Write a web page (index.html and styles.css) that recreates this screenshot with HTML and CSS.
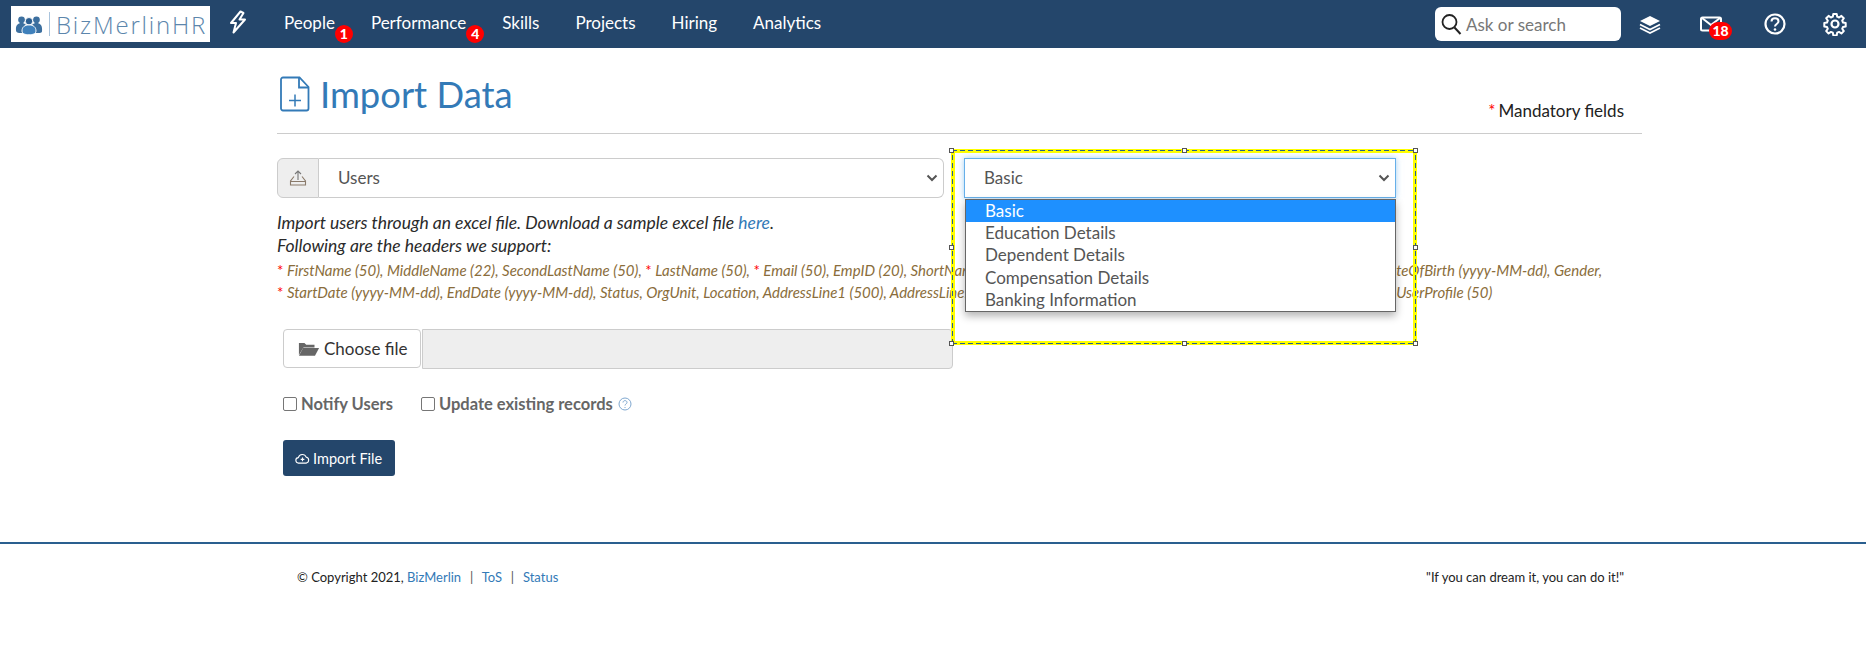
FILE: index.html
```html
<!DOCTYPE html>
<html lang="en">

<head>
  <meta charset="UTF-8">
  <title>Import Data</title>
  <link rel="stylesheet" href="styles.css">
</head>

<body>
  <header class="topbar">
    <a class="logo">
      <svg class="logo-mark" viewBox="0 0 30 24" width="28" height="23">
        <circle cx="7" cy="7" r="3.600" fill="#3c6f9f" />
        <circle cx="23" cy="7" r="3.600" fill="#3c6f9f" />
        <path d="M1 17c0-4 2-6.500 6-6.500s6 2.500 6 6.500-2 4-6 4-6 0-6-4zM17 17c0-4 2-6.500 6-6.500s6 2.500 6 6.500 0 4-6 4-6 0-6-4z" fill="#3c6f9f" />
        <circle cx="15" cy="8.500" r="4" fill="#2c5f92" stroke="#fff" />
        <path d="M7.500 19c0-4.500 3-6.500 7.500-6.500s7.500 2 7.500 6.500c0 3-3.500 4-7.500 4s-7.500-1-7.500-4z" fill="#3f80bb" stroke="#fff" />
      </svg>
      <span class="logo-sep"></span>
      <span class="logo-text">BizMerlinHR</span>
    </a>
    <svg class="bolt" viewBox="0 0 18 24" width="18" height="24">
      <path d="M11.500 1.500 2 13h5l-2.500 9.500L16 9.500h-5.500l4-6.500z" fill="none" stroke="#fff" stroke-width="2" stroke-linejoin="round" />
    </svg>
    <nav class="nav">
      <a>People<span class="dot">1</span></a>
      <a>Performance<span class="dot">4</span></a>
      <a>Skills</a>
      <a>Projects</a>
      <a>Hiring</a>
      <a>Analytics</a>
    </nav>
    <div class="search">
      <svg viewBox="0 0 22 24" width="22" height="24">
        <circle cx="9.500" cy="10" r="7" fill="none" stroke="#222" stroke-width="1.800" />
        <path d="m14.500 15.500 6 6.500" stroke="#222" stroke-width="2" />
      </svg>
      <span>Ask or search</span>
    </div>
    <div class="tools">
      <svg viewBox="0 0 24 20" width="24" height="20">
        <path d="M12 2 22 7l-10 5L2 7z" fill="#fff" />
        <path d="m2 10.500 10 5 10-5M2 14l10 5 10-5" fill="none" stroke="#fff" stroke-width="1.800" />
      </svg>
      <span class="mail">
        <svg viewBox="0 0 22 16" width="22" height="16">
          <rect x="1" y="1.500" width="20" height="13" rx="1.500" fill="none" stroke="#fff" stroke-width="2" />
          <path d="m2 2 9 7 9-7" fill="none" stroke="#fff" stroke-width="2" />
        </svg>
        <span class="count">18</span>
      </span>
      <svg viewBox="0 0 24 24" width="24" height="24">
        <circle cx="12" cy="12" r="9.500" fill="none" stroke="#fff" stroke-width="2.200" />
        <path d="M8.500 9.500c0-2 1.500-3.200 3.500-3.200s3.500 1.200 3.500 3c0 2.700-3.500 2.700-3.500 5.200" fill="none" stroke="#fff" stroke-width="2" />
        <circle cx="12" cy="17.500" r="1.300" fill="#fff" />
      </svg>
      <svg viewBox="0 0 24 24" width="24" height="24">
        <circle cx="12" cy="12" r="3.500" fill="none" stroke="#fff" stroke-width="2.200" />
        <path d="M10.300 2h3.400l.5 2.700 1.900.8 2.300-1.600 2.400 2.400-1.600 2.300.8 1.900 2.700.5v3.400l-2.700.5-.8 1.900 1.600 2.300-2.400 2.400-2.300-1.600-1.900.8-.5 2.700h-3.400l-.5-2.700-1.900-.8-2.300 1.600-2.400-2.400 1.600-2.300-.8-1.900-2.700-.5v-3.400l2.700-.5.8-1.900-1.600-2.300 2.400-2.400 2.300 1.600 1.900-.8z" fill="none" stroke="#fff" stroke-width="2" stroke-linejoin="round" />
      </svg>
    </div>
  </header>

  <main class="content">
    <div class="page-head">
      <h1>
        <svg viewBox="0 0 30 36" width="30" height="36">
          <path d="M3 1.500h16.500L28.500 11v21.500a2 2 0 0 1-2 2H3a2 2 0 0 1-2-2v-29a2 2 0 0 1 2-2z" fill="none" stroke="#337ab7" stroke-width="1.800" />
          <path d="M19 2v9.500h9.500" fill="none" stroke="#337ab7" stroke-width="1.800" />
          <path d="M15 18.500v12M9 24.500h12" stroke="#337ab7" stroke-width="1.500" />
        </svg>
        Import Data
      </h1>
      <span class="mandatory"><i class="req">*</i>Mandatory fields</span>
    </div>

    <div class="selects">
      <div class="input-group">
        <span class="addon">
          <svg viewBox="0 0 18 18" width="18" height="18">
            <path d="M9 2v9M6 5l3-3 3 3" fill="none" stroke="#777" stroke-width="1.100" />
            <path d="M5 7.500 1.500 12v4h15v-4L13 7.500M1.500 12.500h15" fill="none" stroke="#8a7a6a" stroke-width="1.100" />
          </svg>
        </span>
        <div class="fake-select">Users<svg class="chev" viewBox="0 0 12 8" width="12" height="8"><path d="m1.500 1.500 4.500 4.500 4.500-4.500" fill="none" stroke="#555" stroke-width="2" /></svg></div>
      </div>
    </div>

    <p class="intro"><em>Import users through an excel file. Download a sample excel file <a>here</a>.<br>Following are the headers we support:</em></p>
    <p class="headers"><i class="req">*</i> FirstName (50), MiddleName (22), SecondLastName (50), <i class="req">*</i> LastName (50), <i class="req">*</i> Email (50), EmpID (20), ShortName (20), JobTitle (100), Department (50), Phones (20), Mobile (20), DateOfBirth (yyyy-MM-dd), Gender,<br>
      <i class="req">*</i> StartDate (yyyy-MM-dd), EndDate (yyyy-MM-dd), Status, OrgUnit, Location, AddressLine1 (500), AddressLine2 (500), City (50), State (50), Country (50), ZipCode (20), Region (50), UserProfile (50)</p>

    <div class="file-row">
      <button class="btn-choose">
        <svg viewBox="0 0 24 18" width="22" height="17">
          <path d="M1 16V3h6l2 2h9v3H6z" fill="#666" />
          <path d="M5.500 8.500H23L18.500 17H1z" fill="#666" />
        </svg>
        Choose file
      </button>
      <div class="file-name"></div>
    </div>

    <div class="checks">
      <label><span class="box"></span>Notify Users</label>
      <label><span class="box"></span>Update existing records</label>
      <svg viewBox="0 0 14 14" width="14" height="14">
        <circle cx="7" cy="7" r="6" fill="none" stroke="#7fa8d0" />
        <path d="M5 5.500c0-1.200 1-1.900 2-1.900s2 .7 2 1.800C9 7 7 7 7 8.500M7 10v1" fill="none" stroke="#7fa8d0" />
      </svg>
    </div>

    <button class="btn-import">
      <svg viewBox="0 0 16 12" width="15" height="11">
        <path d="M4 11a3 3 0 0 1-.5-6A4.500 4.500 0 0 1 12 4.500 3.300 3.300 0 0 1 12 11z" fill="none" stroke="#fff" stroke-width="1.200" />
        <path d="M8 9V5M6 7h4" stroke="#fff" stroke-width="1.200" />
      </svg>
      Import File
    </button>
  </main>

  <footer class="footer">
    <span>&copy; Copyright 2021, <a>BizMerlin</a> <b>|</b> <a>ToS</a> <b>|</b> <a>Status</a></span>
    <span>"If you can dream it, you can do it!"</span>
  </footer>

  <!-- highlight drawn over the page -->
  <div class="highlight">
    <span class="handle h-tl"></span>
    <span class="handle h-tc"></span>
    <span class="handle h-tr"></span>
    <span class="handle h-ml"></span>
    <span class="handle h-mr"></span>
    <span class="handle h-bl"></span>
    <span class="handle h-bc"></span>
    <span class="handle h-br"></span>
    <div class="fake-select focused">Basic<svg class="chev" viewBox="0 0 12 8" width="12" height="8"><path d="m1.500 1.500 4.500 4.500 4.500-4.500" fill="none" stroke="#555" stroke-width="2" /></svg></div>
    <ul class="options">
      <li class="selected">Basic</li>
      <li>Education Details</li>
      <li>Dependent Details</li>
      <li>Compensation Details</li>
      <li>Banking Information</li>
    </ul>
  </div>
</body>

</html>
```

FILE: styles.css
```css
* {
  box-sizing: border-box;
}

body {
  margin: 0;
  height: 663px;
  overflow: hidden;
  position: relative;
  background: #fff;
  color: #555;
  font-family: Lato, "Open Sans", sans-serif;
  font-size: 17px;
}

a {
  color: #337ab7;
}

.req {
  color: #f00;
  font-style: normal;
}

/* top bar */
.topbar {
  align-items: center;
  background: #24466b;
  display: flex;
  height: 48px;
  padding-left: 11px;
}

.logo {
  align-items: center;
  background: #fff;
  display: flex;
  height: 36px;
  overflow: hidden;
  padding-left: 4px;
  width: 199px;
}

.logo-mark {
  flex-shrink: 0;
}

.logo-sep {
  background: #a9c3dc;
  flex-shrink: 0;
  height: 24px;
  margin: 0 6px;
  width: 1px;
}

.logo-text {
  color: #5c86ac;
  font-family: "Open Sans", sans-serif;
  font-size: 24px;
  font-weight: 300;
  letter-spacing: 1.800px;
  white-space: nowrap;
}

.bolt {
  margin: -4px 0 0 19px;
}

.nav {
  display: flex;
  gap: 36px;
  line-height: 20px;
  margin: -2px 0 0 37px;
}

.nav a {
  color: #fff;
  position: relative;
}

.dot {
  background: #f00;
  border-radius: 50%;
  color: #fff;
  font-size: 14px;
  font-weight: 900;
  height: 18px;
  line-height: 18px;
  position: absolute;
  right: -18px;
  text-align: center;
  top: 12px;
  width: 18px;
}

.search {
  align-items: center;
  background: #fff;
  border-radius: 6px;
  color: #777;
  display: flex;
  gap: 4px;
  height: 34px;
  margin-left: auto;
  padding-left: 5px;
  width: 186px;
}

.tools {
  align-items: center;
  display: flex;
  margin-left: 17px;
  margin-right: 19px;
}

.tools > svg:nth-child(1) {
  margin-right: 38px;
}

.tools > svg:nth-child(3) {
  margin-right: 36px;
}

.mail {
  margin-right: 41px;
  position: relative;
}

.mail svg {
  display: block;
}

.count {
  background: #f00;
  border-radius: 9px;
  color: #fff;
  font-size: 14px;
  font-weight: 900;
  height: 18px;
  left: 9px;
  line-height: 18px;
  position: absolute;
  text-align: center;
  top: 6px;
  width: 23px;
}

/* page */
.content {
  margin-left: 277px;
  width: 1365px;
}

.page-head {
  align-items: flex-end;
  border-bottom: 1px solid #ccc;
  display: flex;
  height: 86px;
  justify-content: space-between;
  padding-bottom: 12px;
}

h1 {
  align-items: center;
  color: #337ab7;
  display: flex;
  font-size: 36.400px;
  font-weight: 400;
  gap: 10px;
  line-height: 44px;
  margin: 0;
  padding-left: 3px;
  position: relative;
  top: -5px;
}

.mandatory {
  color: #222;
  margin-right: 18px;
}

.mandatory .req {
  margin-right: 3px;
}

.selects {
  margin-top: 24px;
}

.input-group {
  display: flex;
  height: 40px;
  width: 667px;
}

.addon {
  align-items: center;
  background: #eee;
  border: 1px solid #ccc;
  border-radius: 6px 0 0 6px;
  display: flex;
  justify-content: center;
  width: 42px;
}

.fake-select {
  align-items: center;
  background: #fff;
  border: 1px solid #ccc;
  border-left: 0;
  border-radius: 0 6px 6px 0;
  color: #555;
  display: flex;
  flex: 1;
  justify-content: space-between;
  line-height: 36px;
  padding: 0 5px 0 19px;
}

.intro {
  color: #2a2a2a;
  font-size: 17.500px;
  line-height: 23px;
  margin: 13px 0 0;
}

.headers {
  color: #8a6d3b;
  font-size: 15px;
  font-style: italic;
  line-height: 22px;
  margin: 2px 0 0;
  white-space: nowrap;
}

.file-row {
  display: flex;
  gap: 1px;
  margin: 26px 0 0 6px;
}

.btn-choose {
  align-items: center;
  background: #fff;
  border: 1px solid #ccc;
  border-radius: 4px;
  color: #333;
  display: flex;
  font: inherit;
  gap: 4px;
  height: 39px;
  padding: 0 0 0 14px;
  white-space: nowrap;
  width: 138px;
}

.file-name {
  background: #eee;
  border: 1px solid #ccc;
  border-radius: 0 4px 4px 0;
  height: 40px;
  width: 531px;
}

.checks {
  align-items: center;
  display: flex;
  margin: 25px 0 0 6px;
}

.checks label {
  align-items: center;
  color: #666;
  display: flex;
  font-size: 16.500px;
  font-weight: 700;
  margin-right: 5px;
}

.checks label:first-child {
  margin-right: 28px;
}

.box {
  background: #fff;
  border: 1px solid #767676;
  border-radius: 2px;
  height: 14px;
  margin-right: 4px;
  width: 14px;
}

.btn-import {
  align-items: center;
  background: #24466b;
  border: 0;
  border-radius: 3px;
  color: #fff;
  display: flex;
  font: inherit;
  font-size: 14.500px;
  gap: 3px;
  height: 36px;
  margin: 26px 0 0 6px;
  padding: 0 0 0 12px;
  width: 112px;
}

.footer {
  border-top: 2px solid #2a5f8f;
  color: #222;
  display: flex;
  font-size: 13px;
  justify-content: space-between;
  left: 0;
  padding: 25px 242px 0 297px;
  position: absolute;
  right: 0;
  top: 542px;
}

.footer b {
  color: #555;
  font-weight: 400;
  margin: 0 5.500px;
}

/* highlight over the page, the text behind shows through it */
.highlight {
  border: 4px solid #ff0;
  height: 196px;
  left: 951px;
  position: absolute;
  top: 149px;
  width: 466px;
}

.highlight::before {
  background:
    repeating-linear-gradient(90deg, #24608f 0 5px, transparent 5px 8px) top / 100% 1px no-repeat,
    repeating-linear-gradient(90deg, #24608f 0 5px, transparent 5px 8px) bottom / 100% 1px no-repeat,
    repeating-linear-gradient(0deg, #24608f 0 5px, transparent 5px 8px) left / 1px 100% no-repeat,
    repeating-linear-gradient(0deg, #24608f 0 5px, transparent 5px 8px) right / 1px 100% no-repeat;
  content: "";
  inset: -3px;
  position: absolute;
}

.handle {
  background: #fff;
  border: 1px solid #555;
  height: 5px;
  position: absolute;
  width: 5px;
}

.h-tl { left: -6px; top: -5px; }
.h-tc { left: 227px; top: -5px; }
.h-tr { right: -5px; top: -5px; }
.h-ml { left: -6px; top: 92px; }
.h-mr { right: -5px; top: 92px; }
.h-bl { left: -6px; bottom: -5px; }
.h-bc { left: 227px; bottom: -5px; }
.h-br { right: -5px; bottom: -5px; }

.focused {
  border: 1px solid #66afe9;
  border-radius: 0;
  box-shadow: 0 0 6px rgba(102, 175, 233, .6);
  height: 40px;
  margin: 5px 0 0 9px;
  position: relative;
  width: 432px;
}

.options {
  background: #fff;
  border: 1px solid #666;
  box-shadow: 0 4px 8px rgba(0, 0, 0, .3);
  left: 10px;
  list-style: none;
  margin: 0;
  padding: 0;
  position: absolute;
  top: 46px;
  width: 431px;
}

.options li {
  color: #555;
  height: 22.200px;
  line-height: 22px;
  padding-left: 19px;
}

.options .selected {
  background: #1e90ff;
  color: #fff;
}
```
